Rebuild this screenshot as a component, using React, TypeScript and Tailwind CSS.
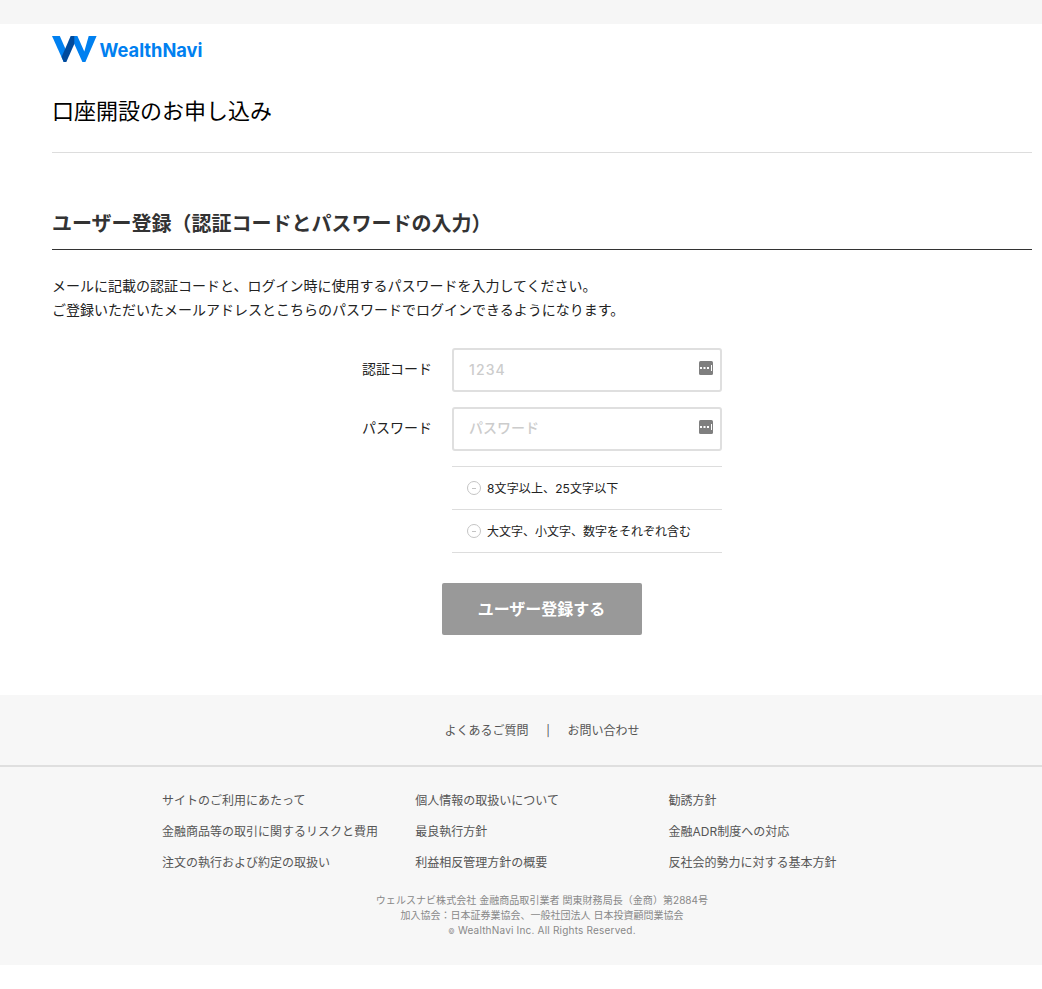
import React from "react";

const columns = [
  ["サイトのご利用にあたって", "金融商品等の取引に関するリスクと費用", "注文の執行および約定の取扱い"],
  ["個人情報の取扱いについて", "最良執行方針", "利益相反管理方針の概要"],
  ["勧誘方針", "金融ADR制度への対応", "反社会的勢力に対する基本方針"],
];

function Logo() {
  return (
    <div className="flex h-[26px] items-center">
      <svg width="45" height="26" viewBox="0 0 45 26" className="shrink-0">
        <path d="M0 0H7.8L15 16.5L14 26H11.7Z" fill="#0080f0" />
        <path d="M18.7 0H25.4L32.3 15.5L36.7 0H44.6L33.4 26H30.4L18.7 0Z" fill="#0080f0" />
        <path d="M18.7 0H22.3V8L14.3 26H11.7L9.6 21Z" fill="#004a9c" />
      </svg>
      <svg width="110" height="26" className="shrink-0" role="img" aria-label="WealthNavi">
        <text x="2.5" y="20.6" textLength="103" lengthAdjust="spacingAndGlyphs" fontSize="19" fontWeight="700" fill="#0080f0" fontFamily="Inter, sans-serif">WealthNavi</text>
      </svg>
    </div>
  );
}

function Field({ label, placeholder, type }: { label: string; placeholder: string; type: string }) {
  return (
    <label className="flex h-11 items-center">
      <span className="w-[90px] pb-[3px] text-[14px] leading-[21px]">{label}</span>
      <span className="flex h-11 w-[270px] items-center rounded-[3px] border-2 border-[#dfdfdf] pl-[15px] pr-[7px]">
        <input type={type} placeholder={placeholder} className={`min-w-0 flex-1 text-[14px] font-medium outline-none placeholder:text-[#cccccc] ${type === "text" ? "pb-[2px] tracking-[0.08em]" : "pb-[3px]"}`} />
        <svg width="14" height="14" viewBox="0 0 14 14" className="mb-1">
          <rect width="14" height="14" rx="1.5" fill="#7f7f7f" />
          <path d="M1 6h2v2H1zM4.5 6h2v2h-2zM8 6h2v2H8zM12 4h1v6h-1z" fill="#fff" />
        </svg>
      </span>
    </label>
  );
}

function Rule({ children }: { children: React.ReactNode }) {
  return (
    <li className="flex h-[43px] items-center border-b border-[#dddddd] pl-[15px] text-[12px]">
      <svg width="14" height="14" viewBox="0 0 14 14" className="mr-[6px]" fill="none" stroke="#c4c4c4">
        <circle cx="7" cy="7" r="6.5" />
        <path d="M5 7.5h4" />
      </svg>
      <span className="pt-[2px]">{children}</span>
    </li>
  );
}

export default function App() {
  return (
    <div className="min-h-[989px] bg-white font-[Inter,'Noto_Sans_CJK_JP',sans-serif] text-[#222222]">
      <div className="h-6 bg-[#f6f6f6]" />
      <main className="h-[671px] pl-[52px] pr-[10px] pt-3">
        <Logo />
        <h1 className="flex h-[91px] items-center border-b border-[#dddddd] pt-2 text-[22px] text-black">口座開設のお申し込み</h1>
        <h2 className="mt-[52px] flex h-[45px] items-center border-b border-[#333333] pb-[7px] text-[20px] font-bold text-[#333333]">ユーザー登録（認証コードとパスワードの入力）</h2>
        <p className="mt-6 text-[14px] leading-6">
          メールに記載の認証コードと、ログイン時に使用するパスワードを入力してください。<br />
          ご登録いただいたメールアドレスとこちらのパスワードでログインできるようになります。
        </p>
        <form className="mt-[26px]">
          <div className="mx-auto flex w-[360px] flex-col gap-[15px]">
            <Field label="認証コード" placeholder="1234" type="text" />
            <Field label="パスワード" placeholder="パスワード" type="password" />
            <ul className="ml-[90px] border-t border-[#dddddd]">
              <Rule><span className="tracking-[0.01em]">8文字以上、25文字以下</span></Rule>
              <Rule>大文字、小文字、数字をそれぞれ含む</Rule>
            </ul>
          </div>
          <button type="button" className="mx-auto mt-[30px] flex h-[52px] w-[200px] items-center justify-center rounded-[2px] bg-[#999999] pr-px text-[16px] font-bold text-white">ユーザー登録する</button>
        </form>
      </main>
      <footer className="h-[270px] bg-[#f7f7f7] text-[12px] text-[#555555]">
        <nav className="flex h-[72px] items-center justify-center border-b-2 border-[#dfdfdf] pl-[42px] pt-[2px]">
          <span>よくあるご質問</span>
          <span className="w-[39px] text-center text-[11px]">|</span>
          <span>お問い合わせ</span>
        </nav>
        <div className="mx-auto flex w-[760px] pl-[21px] pt-[18px]">
          {columns.map((items) => (
            <ul key={items[0]} className="w-[253.3px] shrink-0">
              {items.map((item) => <li key={item} className="h-[31px] leading-[31px] whitespace-nowrap">{item}</li>)}
            </ul>
          ))}
        </div>
        <p className="mt-[15px] pl-[42px] text-center text-[10px] leading-[15px] text-[#888888]">
          <span className="tracking-[0.005em]">ウェルスナビ株式会社 金融商品取引業者 関東財務局長（金商）第2884号</span><br />
          加入協会：日本証券業協会、一般社団法人 日本投資顧問業協会<br />
          <span className="tracking-[0.02em]"><span className="text-[7px]">©</span> WealthNavi Inc. All Rights Reserved.</span>
        </p>
      </footer>
    </div>
  );
}
